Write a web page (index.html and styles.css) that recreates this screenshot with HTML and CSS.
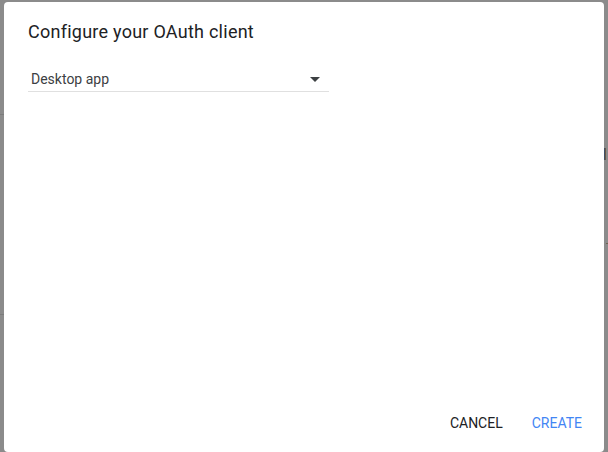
FILE: index.html
```html
<!DOCTYPE html>
<html>
<head>
<meta charset="utf-8">
<link rel="stylesheet" href="styles.css">
</head>
<body>
<div class="backdrop">
  <div class="dialog">
    <h1 class="title">Configure your OAuth client</h1>
    <div class="select">
      <span class="select-value">Desktop app</span>
      <span class="arrow"></span>
    </div>
    <div class="spacer"></div>
    <div class="actions">
      <button class="btn">CANCEL</button>
      <button class="btn primary">CREATE</button>
    </div>
  </div>
</div>
</body>
</html>
```
FILE: styles.css
```css
html, body {
  margin: 0;
  padding: 0;
  width: 608px;
  height: 452px;
  overflow: hidden;
  font-family: Roboto, "Liberation Sans", sans-serif;
}
body {
  background-color: #8b8b8b;
  background-image:
    linear-gradient(#7c7c7c, #7c7c7c),
    linear-gradient(#7c7c7c, #7c7c7c),
    linear-gradient(#3f4f66, #3f4f66),
    linear-gradient(#6a5a48, #6a5a48),
    linear-gradient(#6e6452, #6e6452);
  background-size: 4px 1px, 4px 1px, 1px 12px, 1px 12px, 2px 1px;
  background-position: 0 114px, 0 314px, 604px 148px, 605px 148px, 606px 243px;
  background-repeat: no-repeat;
}
.backdrop {
  padding: 2px 4px 0 4px;
  height: 452px;
  box-sizing: border-box;
}
.dialog {
  width: 600px;
  height: 450px;
  background: #ffffff;
  border-radius: 4px;
  box-sizing: border-box;
  padding: 18px 24px 0 24px;
  display: flex;
  flex-direction: column;
}
.title {
  margin: 0;
  font-size: 18px;
  font-weight: 400;
  line-height: 24px;
  letter-spacing: 0.25px;
  color: #202124;
}
.select {
  margin-top: 23px;
  width: 298px;
  height: 24px;
  border-bottom: 1px solid #e0e0e0;
  display: flex;
  align-items: center;
  justify-content: space-between;
  box-sizing: content-box;
  padding-left: 3px;
}
.select-value {
  font-size: 14px;
  color: #3c4043;
  line-height: 20px;
}
.arrow {
  width: 0;
  height: 0;
  border-left: 5px solid transparent;
  border-right: 5px solid transparent;
  border-top: 5px solid #3c4043;
  margin-right: 9px;
}
.spacer {
  flex: 1;
}
.actions {
  display: flex;
  justify-content: flex-end;
  gap: 13px;
  margin-right: -10px;
  padding-bottom: 11px;
}
.btn {
  font-family: Roboto, "Liberation Sans", sans-serif;
  font-size: 14px;
  font-weight: 400;
  background: none;
  border: none;
  padding: 0 8px;
  height: 36px;
  line-height: 36px;
  color: #202124;
  cursor: pointer;
}
.btn.primary {
  color: #4285f4;
}
```
